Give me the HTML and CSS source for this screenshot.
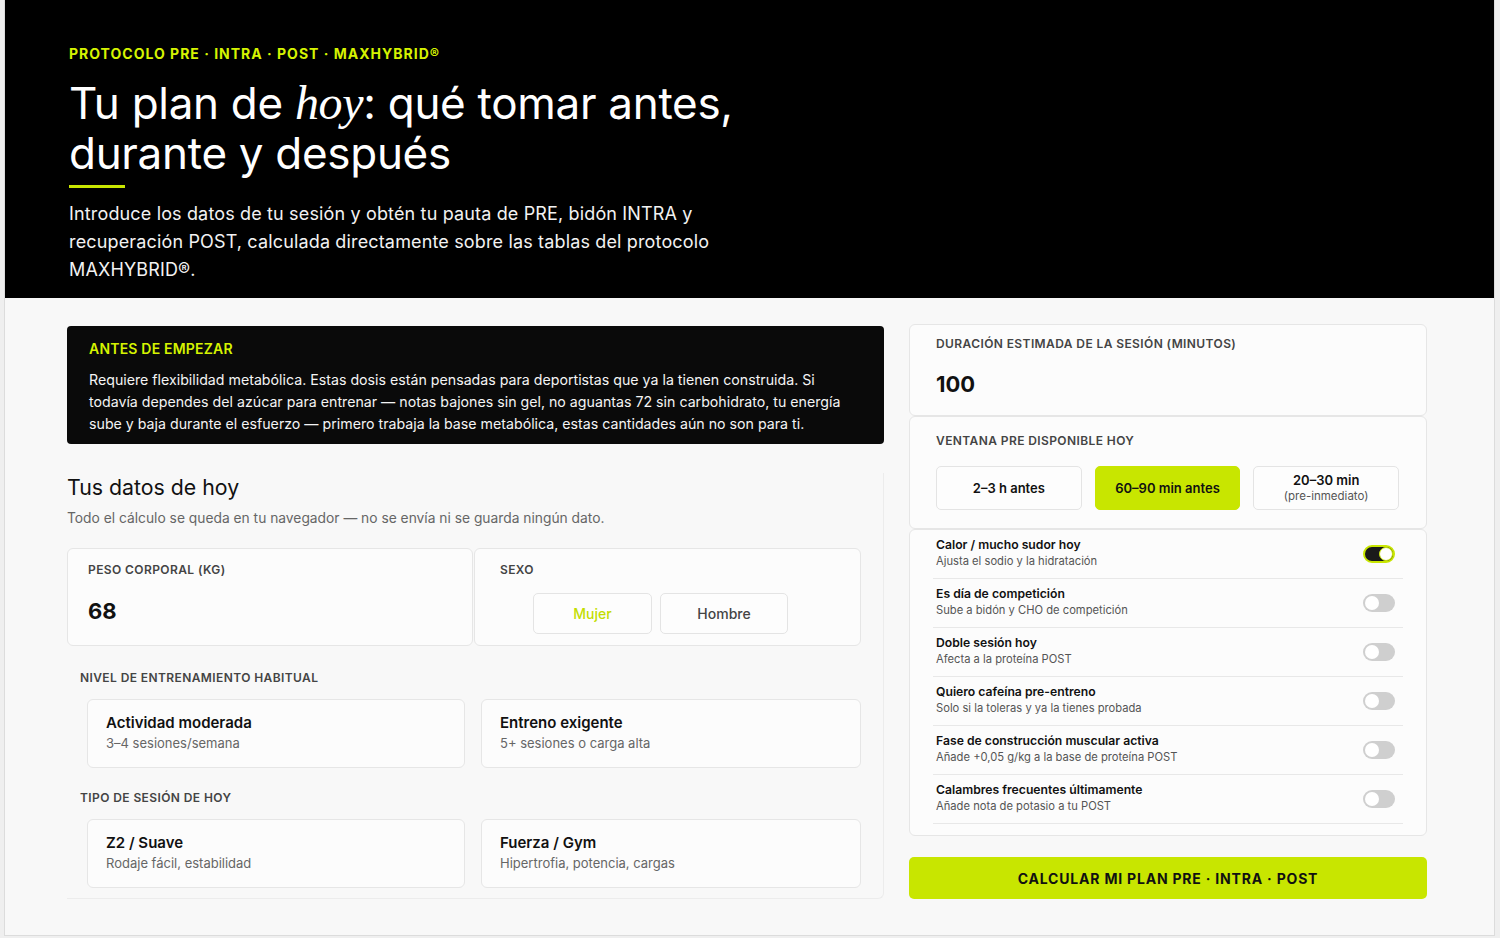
FILE: index.html
```html
<!DOCTYPE html>
<html lang="es">
<head>
    <meta charset="UTF-8">
    <meta name="viewport" content="width=device-width, initial-scale=1.0">
    <title>Tu plan de hoy · MAXHYBRID®</title>
    <link rel="stylesheet" href="styles.css">
</head>
<body>
    <div class="page">
        <header class="hero">
            <p class="eyebrow">PROTOCOLO PRE · INTRA · POST · MAXHYBRID®</p>
            <h1>Tu plan de <em>hoy</em>: qué tomar antes,<br>durante y después</h1>
            <div class="hero-bar"></div>
            <p class="lead">Introduce los datos de tu sesión y obtén tu pauta de PRE, bidón INTRA y recuperación POST, calculada directamente sobre las tablas del protocolo MAXHYBRID®.</p>
        </header>

        <main class="layout">
            <section class="col-left">
                <div class="notice">
                    <h4>ANTES DE EMPEZAR</h4>
                    <p>Requiere flexibilidad metabólica. Estas dosis están pensadas para deportistas que ya la tienen construida. Si todavía dependes del azúcar para entrenar — notas bajones sin gel, no aguantas 72 sin carbohidrato, tu energía sube y baja durante el esfuerzo — primero trabaja la base metabólica, estas cantidades aún no son para ti.</p>
                </div>

                <div class="panel">
                    <h2>Tus datos de hoy</h2>
                    <p class="muted">Todo el cálculo se queda en tu navegador — no se envía ni se guarda ningún dato.</p>

                    <div class="row-two">
                        <div class="card field weight">
                            <span class="label">PESO CORPORAL (KG)</span>
                            <span class="value">68</span>
                        </div>
                        <div class="card field sex">
                            <span class="label">SEXO</span>
                            <div class="seg">
                                <button class="seg-btn is-on">Mujer</button>
                                <button class="seg-btn">Hombre</button>
                            </div>
                        </div>
                    </div>

                    <div class="group">
                        <span class="label">NIVEL DE ENTRENAMIENTO HABITUAL</span>
                        <div class="options">
                            <div class="card option">
                                <strong>Actividad moderada</strong>
                                <span>3–4 sesiones/semana</span>
                            </div>
                            <div class="card option">
                                <strong>Entreno exigente</strong>
                                <span>5+ sesiones o carga alta</span>
                            </div>
                        </div>
                    </div>

                    <div class="group">
                        <span class="label">TIPO DE SESIÓN DE HOY</span>
                        <div class="options">
                            <div class="card option">
                                <strong>Z2 / Suave</strong>
                                <span>Rodaje fácil, estabilidad</span>
                            </div>
                            <div class="card option">
                                <strong>Fuerza / Gym</strong>
                                <span>Hipertrofia, potencia, cargas</span>
                            </div>
                        </div>
                    </div>
                </div>
            </section>

            <aside class="col-right">
                <div class="card side duration">
                    <span class="label">DURACIÓN ESTIMADA DE LA SESIÓN (MINUTOS)</span>
                    <span class="value">100</span>
                </div>

                <div class="card side window">
                    <span class="label">VENTANA PRE DISPONIBLE HOY</span>
                    <div class="win-opts">
                        <button class="win-btn">2–3 h antes</button>
                        <button class="win-btn is-on">60–90 min antes</button>
                        <button class="win-btn">20–30 min<small>(pre-inmediato)</small></button>
                    </div>
                </div>

                <div class="card side toggles">
                    <div class="toggle-row">
                        <div><strong>Calor / mucho sudor hoy</strong><span>Ajusta el sodio y la hidratación</span></div>
                        <span class="switch is-on"></span>
                    </div>
                    <div class="toggle-row">
                        <div><strong>Es día de competición</strong><span>Sube a bidón y CHO de competición</span></div>
                        <span class="switch"></span>
                    </div>
                    <div class="toggle-row">
                        <div><strong>Doble sesión hoy</strong><span>Afecta a la proteína POST</span></div>
                        <span class="switch"></span>
                    </div>
                    <div class="toggle-row">
                        <div><strong>Quiero cafeína pre-entreno</strong><span>Solo si la toleras y ya la tienes probada</span></div>
                        <span class="switch"></span>
                    </div>
                    <div class="toggle-row">
                        <div><strong>Fase de construcción muscular activa</strong><span>Añade +0,05 g/kg a la base de proteína POST</span></div>
                        <span class="switch"></span>
                    </div>
                    <div class="toggle-row">
                        <div><strong>Calambres frecuentes últimamente</strong><span>Añade nota de potasio a tu POST</span></div>
                        <span class="switch"></span>
                    </div>
                </div>

                <button class="cta">CALCULAR MI PLAN PRE · INTRA · POST</button>
            </aside>
        </main>
    </div>
</body>
</html>
```

FILE: styles.css
```css
/* Base */
body {
    margin: 0;
    background: #efefef;
    font-family: 'Inter', 'Noto Sans', sans-serif;
    color: #111;
}

button {
    font-family: inherit;
    cursor: pointer;
}

.page {
    margin: 0 5px 0 4px;
    background: #f8f8f8;
    border-left: 1px solid #dcdcdc;
    border-right: 1px solid #dcdcdc;
    border-bottom: 1px solid #dcdcdc;
}

/* Hero */
.hero {
    background: #000;
    padding: 45px 64px 14px;
}

.eyebrow {
    margin: 0;
    color: #d6f400;
    font-size: 14px;
    font-weight: 700;
    letter-spacing: 1px;
    line-height: 18px;
}

.hero h1 {
    margin: 15px 0 0;
    color: #fff;
    font-size: 44px;
    font-weight: 400;
    line-height: 50px;
    letter-spacing: -0.3px;
}

.hero h1 em {
    font-family: 'Liberation Serif', serif;
    font-style: italic;
    font-size: 48px;
}

.hero-bar {
    width: 56px;
    height: 3px;
    margin-top: 7px;
    background: #c8e600;
}

.lead {
    max-width: 690px;
    margin: 12px 0 0;
    color: #f2f2f2;
    font-size: 18px;
    letter-spacing: 0.15px;
    line-height: 28px;
}

/* Layout */
.layout {
    display: grid;
    grid-template-columns: 817px 518px;
    gap: 25px;
    padding: 26px 67px 36px 62px;
}

.card {
    background: #fcfcfc;
    border: 1px solid #e6e6e6;
    border-radius: 6px;
    box-sizing: border-box;
}

.label {
    display: block;
    color: #444;
    font-size: 12px;
    font-weight: 600;
    letter-spacing: 0.4px;
    line-height: 16px;
}

.value {
    display: block;
    font-size: 22px;
    font-weight: 700;
    line-height: 28px;
}

/* Notice */
.notice {
    margin-top: 2px;
    background: #0a0a0a;
    border-radius: 4px;
    padding: 14px 22px 9px;
}

.notice h4 {
    margin: 0;
    color: #d6f400;
    font-size: 14px;
    font-weight: 600;
    line-height: 18px;
    letter-spacing: 0.2px;
}

.notice p {
    margin: 11px 0 0;
    color: #f4f4f4;
    font-size: 14.2px;
    line-height: 22px;
}

/* Left panel */
.panel {
    margin-top: 29px;
    padding: 0 22px 10px 0;
    border-right: 1px solid #ececec;
    border-bottom: 1px solid #ececec;
    border-radius: 0 0 6px 0;
}

.panel h2 {
    margin: 0;
    font-size: 21.3px;
    font-weight: 400;
    line-height: 28px;
}

.muted {
    margin: 7px 0 0;
    color: #666;
    font-size: 13.8px;
    line-height: 20px;
}

.row-two {
    display: grid;
    grid-template-columns: 406px 1fr;
    gap: 1px;
    margin-top: 20px;
}

.field {
    height: 98px;
    padding: 13px 20px 0;
}

.weight .value {
    margin-top: 19px;
}

.sex {
    padding-left: 25px;
}

.seg {
    display: flex;
    gap: 8px;
    margin-top: 15px;
    padding-left: 33px;
}

.seg-btn {
    height: 41px;
    background: #fdfdfd;
    border: 1px solid #e4e4e4;
    border-radius: 5px;
    color: #444;
    font-size: 14px;
    font-weight: 500;
}

.seg-btn:first-child {
    width: 119px;
}

.seg-btn:last-child {
    width: 128px;
}

.seg-btn.is-on {
    color: #c3dd00;
}

.group {
    padding-left: 13px;
    margin-top: 24px;
}

.group + .group {
    margin-top: 22px;
}

.options {
    display: grid;
    grid-template-columns: 378px 380px;
    gap: 16px;
    margin-top: 13px;
    padding-left: 7px;
}

.option {
    display: flex;
    flex-direction: column;
    padding: 12px 18px 13px;
}

.option strong {
    font-size: 15px;
    font-weight: 600;
    line-height: 21px;
}

.option span {
    color: #666;
    font-size: 13px;
    line-height: 21px;
}

/* Right column */
.col-right {
    display: flex;
    flex-direction: column;
}

.side {
    padding: 11px 26px 17px;
}

.duration .value {
    margin-top: 18px;
}

.window {
    padding-top: 16px;
    padding-bottom: 18px;
}

.win-opts {
    display: grid;
    grid-template-columns: repeat(3, 1fr);
    gap: 13px;
    margin-top: 17px;
    padding-right: 1px;
}

.win-btn {
    height: 44px;
    background: #fdfdfd;
    border: 1px solid #e4e4e4;
    border-radius: 5px;
    color: #111;
    font-size: 13px;
    font-weight: 600;
    line-height: 16px;
}

.win-btn.is-on {
    background: #c8e600;
    border-color: #c8e600;
}

.win-btn small {
    display: block;
    color: #555;
    font-size: 11.5px;
    font-weight: 400;
}

.toggles {
    padding: 0 23px 11px;
}

.toggle-row {
    display: flex;
    align-items: center;
    justify-content: space-between;
    padding: 7px 8px 8px 3px;
    border-bottom: 1px solid #e8e8e8;
}

.toggle-row strong {
    display: block;
    font-size: 12.2px;
    font-weight: 600;
    line-height: 16px;
}

.toggle-row span {
    display: block;
    color: #555;
    font-size: 11.2px;
    line-height: 17px;
}

.switch {
    position: relative;
    width: 32px;
    height: 18px;
    border-radius: 9px;
    background: #cfcfcf;
    box-sizing: border-box;
}

.switch::after {
    content: "";
    position: absolute;
    top: 2px;
    left: 2px;
    width: 14px;
    height: 14px;
    border-radius: 50%;
    background: #fff;
}

.switch.is-on {
    background: #1a1a1a;
    border: 2px solid #c8e600;
}

.switch.is-on::after {
    top: 0;
    left: auto;
    right: 0;
    border: 1px solid #c8e600;
    box-sizing: border-box;
}

.cta {
    height: 42px;
    margin-top: 21px;
    background: #c8e600;
    border: none;
    border-radius: 5px;
    color: #111;
    font-size: 14px;
    font-weight: 700;
    letter-spacing: 0.8px;
}
```
